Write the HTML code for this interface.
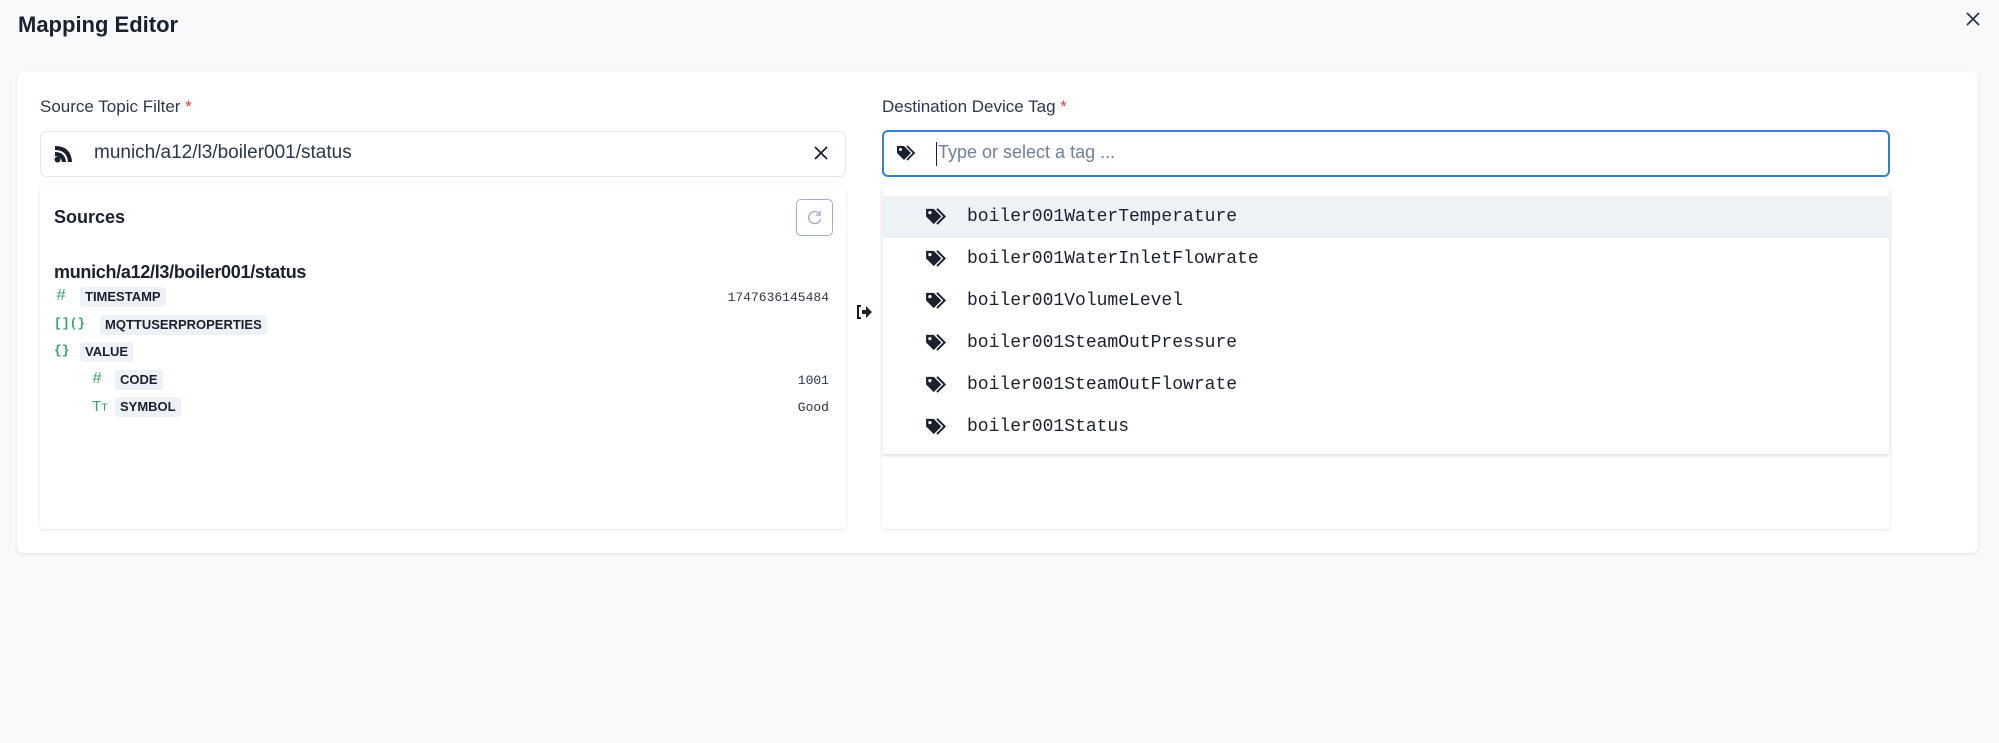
<!DOCTYPE html>
<html><head><meta charset="utf-8"><style>
*{box-sizing:border-box;margin:0;padding:0}
body{width:1999px;height:743px;background:#f8f9fb;font-family:"Liberation Sans",sans-serif;color:#1a202c;position:relative;overflow:hidden}
.abs{position:absolute}
.title{left:18px;top:12px;font-size:22px;font-weight:bold;color:#1a202c}
.card{left:17px;top:72px;width:1961px;height:481px;background:#fff;border-radius:7px;box-shadow:0 1px 3px rgba(0,0,0,.1)}
.lbl{font-size:17px;color:#2d3748}
.lbl b{color:#e53e3e;font-weight:normal}
.input{background:#fff;border:1px solid #e2e8f0;border-radius:6px}
.panel{background:#fff;border-radius:4px;box-shadow:0 1px 3px rgba(0,0,0,.12)}
.badge{position:absolute;background:#edf2f7;border-radius:3px;font-size:13px;font-weight:bold;height:20px;line-height:20px;padding:0 5px;color:#1a202c}
.ic{position:absolute;color:#38a169;font-family:"Liberation Mono",monospace;font-size:17px}
.val{position:absolute;right:1170px;font-family:"Liberation Mono",monospace;font-size:13px;color:#2d3748}
.item{position:absolute;left:0;width:1006px;height:42px}
.item span{position:absolute;left:84px;top:11px;font-family:"Liberation Mono",monospace;font-size:18px;color:#1a202c}
.item svg{position:absolute;left:42px;top:11px}
</style></head><body>
<div class="abs title">Mapping Editor</div>
<svg class="abs" style="left:1966px;top:12px" width="14" height="14" viewBox="0 0 14 14"><path d="M1 1L13 13M13 1L1 13" stroke="#2d3748" stroke-width="1.8"/></svg>
<div class="abs card"></div>
<div class="abs lbl" style="left:40px;top:97px">Source Topic Filter <b>*</b></div>
<div class="abs input" style="left:40px;top:131px;width:806px;height:46px"></div>
<svg class="abs" style="left:54px;top:145px" width="19" height="18" viewBox="0 0 19 18"><path d="M1 1Q17 1 18 17L14 17Q13 5 1 5Z M1 7Q11 7 12 17L8 17Q7 11 1 11Z" fill="#1a202c"/><circle cx="3.5" cy="14.5" r="3" fill="#1a202c"/></svg>
<div class="abs" style="left:94px;top:142px;font-size:19px;color:#2d3748">munich/a12/l3/boiler001/status</div>
<svg class="abs" style="left:814px;top:146px" width="14" height="14" viewBox="0 0 14 14"><path d="M1 1L13 13M13 1L1 13" stroke="#1a202c" stroke-width="1.8"/></svg>
<div class="abs panel" style="left:40px;top:186px;width:806px;height:343px"></div>
<div class="abs" style="left:54px;top:207px;font-size:18px;font-weight:bold">Sources</div>
<div class="abs" style="left:796px;top:199px;width:37px;height:37px;border:1px solid #a0aec0;border-radius:5px"></div>
<svg class="abs" style="left:806px;top:209px" width="17" height="17" viewBox="0 0 17 17"><path d="M13.5 5A6 6 0 1 0 14.5 10" fill="none" stroke="#a0aec0" stroke-width="1.4"/><path d="M14 2V6H10" fill="none" stroke="#a0aec0" stroke-width="1.4"/></svg>
<div class="abs" style="left:54px;top:262px;font-size:18px;font-weight:bold;letter-spacing:-0.3px">munich/a12/l3/boiler001/status</div>
<div class="ic" style="left:56px;top:287px">#</div><div class="badge" style="left:80px;top:287px">TIMESTAMP</div><div class="val" style="top:290px;right:1170px">1747636145484</div>
<div class="ic" style="left:54px;top:316px;font-size:13px;font-weight:bold">[](}</div><div class="badge" style="left:100px;top:315px">MQTTUSERPROPERTIES</div>
<div class="ic" style="left:54px;top:343px;font-size:13px;font-weight:bold">{}</div><div class="badge" style="left:80px;top:342px">VALUE</div>
<div class="ic" style="left:92px;top:370px">#</div><div class="badge" style="left:115px;top:370px">CODE</div><div class="val" style="top:373px">1001</div>
<div class="ic" style="left:92px;top:398px;font-family:'Liberation Sans';font-size:15px">T<span style="font-size:11px">T</span></div><div class="badge" style="left:115px;top:397px">SYMBOL</div><div class="val" style="top:400px">Good</div>
<svg class="abs" style="left:856px;top:304px" width="17" height="16" viewBox="0 0 17 16"><path d="M5 2H2V14H5" fill="none" stroke="#1a202c" stroke-width="2"/><path d="M6 6H10V2L16 8L10 14V10H6Z" fill="#1a202c"/></svg>
<div class="abs lbl" style="left:882px;top:97px">Destination Device Tag <b>*</b></div>
<div class="abs" style="left:882px;top:130px;width:1008px;height:47px;border:2px solid #3182ce;border-radius:6px;background:#fff"></div>
<svg class="abs" style="left:896px;top:145px" width="22" height="17" viewBox="0 0 22 17"><path d="M1 1H8L15 8L8 15L1 8Z" fill="#1a202c"/><circle cx="4.5" cy="4.5" r="1.5" fill="#fff"/><path d="M11 1L18 8L11 15" fill="none" stroke="#1a202c" stroke-width="1.8"/></svg>
<div class="abs" style="left:936px;top:142px;width:1px;height:24px;background:#1a202c"></div>
<div class="abs" style="left:938px;top:142px;font-size:18px;color:#718096">Type or select a tag ...</div>
<div class="abs panel" style="left:882px;top:186px;width:1008px;height:343px"></div>
<div class="abs" style="left:883px;top:187px;width:1006px;height:268px;background:#fff;border-bottom:1px solid #e2e8f0;box-shadow:0 1px 3px rgba(0,0,0,.12)">
<div class="item" style="top:9px;background:#edf2f7"><svg width="24" height="20" viewBox="0 0 22 17"><path d="M1 1H8L15 8L8 15L1 8Z" fill="#1a202c"/><circle cx="4.5" cy="4.5" r="1.5" fill="#fff"/><path d="M11 1L18 8L11 15" fill="none" stroke="#1a202c" stroke-width="1.8"/></svg><span>boiler001WaterTemperature</span></div>
<div class="item" style="top:51px"><svg width="24" height="20" viewBox="0 0 22 17"><path d="M1 1H8L15 8L8 15L1 8Z" fill="#1a202c"/><circle cx="4.5" cy="4.5" r="1.5" fill="#fff"/><path d="M11 1L18 8L11 15" fill="none" stroke="#1a202c" stroke-width="1.8"/></svg><span>boiler001WaterInletFlowrate</span></div>
<div class="item" style="top:93px"><svg width="24" height="20" viewBox="0 0 22 17"><path d="M1 1H8L15 8L8 15L1 8Z" fill="#1a202c"/><circle cx="4.5" cy="4.5" r="1.5" fill="#fff"/><path d="M11 1L18 8L11 15" fill="none" stroke="#1a202c" stroke-width="1.8"/></svg><span>boiler001VolumeLevel</span></div>
<div class="item" style="top:135px"><svg width="24" height="20" viewBox="0 0 22 17"><path d="M1 1H8L15 8L8 15L1 8Z" fill="#1a202c"/><circle cx="4.5" cy="4.5" r="1.5" fill="#fff"/><path d="M11 1L18 8L11 15" fill="none" stroke="#1a202c" stroke-width="1.8"/></svg><span>boiler001SteamOutPressure</span></div>
<div class="item" style="top:177px"><svg width="24" height="20" viewBox="0 0 22 17"><path d="M1 1H8L15 8L8 15L1 8Z" fill="#1a202c"/><circle cx="4.5" cy="4.5" r="1.5" fill="#fff"/><path d="M11 1L18 8L11 15" fill="none" stroke="#1a202c" stroke-width="1.8"/></svg><span>boiler001SteamOutFlowrate</span></div>
<div class="item" style="top:219px"><svg width="24" height="20" viewBox="0 0 22 17"><path d="M1 1H8L15 8L8 15L1 8Z" fill="#1a202c"/><circle cx="4.5" cy="4.5" r="1.5" fill="#fff"/><path d="M11 1L18 8L11 15" fill="none" stroke="#1a202c" stroke-width="1.8"/></svg><span>boiler001Status</span></div>
</div>
</body></html>
